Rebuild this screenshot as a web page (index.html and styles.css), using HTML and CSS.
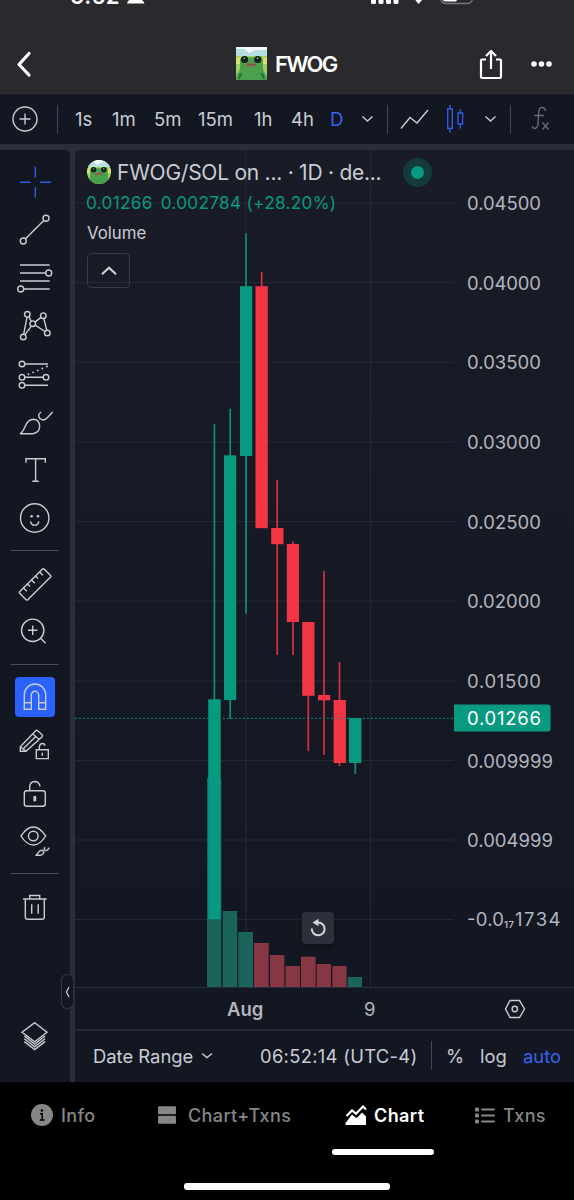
FILE: index.html
```html
<!DOCTYPE html>
<html lang="en">
<head>
    <meta charset="UTF-8">
    <meta name="viewport" content="width=device-width, initial-scale=1.0">
    <title>FWOG Chart</title>
    <link rel="stylesheet" href="styles.css">
</head>
<body>
    <div class="app">
        <div class="status-bar">
            <span class="clock">6:52</span>
            <svg class="status-icons" width="574" height="8" viewBox="0 0 574 8">
                <path d="M127 3.500q1-5 8.500-5t9 5z" fill="#fff"/>
                <g fill="#fff">
                    <rect x="371" y="-6" width="5" height="10" rx="1.500"/>
                    <rect x="378.500" y="-8" width="5" height="12" rx="1.500"/>
                    <rect x="386" y="-8" width="5" height="12" rx="1.500"/>
                    <rect x="393.500" y="-8" width="5" height="12" rx="1.500"/>
                    <path d="M414.500-1h8.500l-4.500 5z"/>
                    <rect x="443" y="-8" width="14" height="9.500" rx="2"/>
                </g>
                <rect x="440.500" y="-12" width="32" height="15.500" rx="5" fill="none" stroke="#77777b" stroke-width="1.300"/>
            </svg>
        </div>

        <div class="header">
            <svg width="24" height="30" viewBox="0 0 24 30" fill="none" stroke="#fff" stroke-width="3.200" stroke-linecap="round" stroke-linejoin="round"><path d="M14 4.500L4 15.500L14 26"/></svg>
            <div class="title">
                <svg width="31" height="33" viewBox="0 0 31 33">
                    <g id="frog">
                        <rect width="31" height="33" fill="#9fce62"/>
                        <rect width="31" height="9" fill="#b8dfe0"/>
                        <path d="M0 2h8l5 4 7-3h11V0H0z" fill="#f2f7f7"/>
                        <path d="M0 11q6-3 9 0v6H0zM23 12q4-3 8-1v6h-8z" fill="#d5e46c"/>
                        <path d="M0 33q0-6 3.500-9 1-3 .5-11 1-4 5-4 2 0 3 1.500h7Q20 9 22.500 9q4 0 4.500 4-.5 8 .5 11 3.500 4 3.500 9z" fill="#4ba04d"/>
                        <path d="M6 26l-3 6M25 26l3 6M4 27l-1 5M27 27l1 5" stroke="#1d6a3a" stroke-width="1.200"/>
                        <circle cx="8.500" cy="12.500" r="3.600" fill="#14241b"/>
                        <circle cx="21.700" cy="12.500" r="3.600" fill="#14241b"/>
                        <circle cx="8.300" cy="11.300" r=".8" fill="#b9c8bf"/>
                        <circle cx="21.500" cy="11.300" r=".8" fill="#b9c8bf"/>
                        <path d="M9.800 18q1.200-2.200 5.200-2.200t5.500 2.200q-1 1.800-5.500 1.800T9.800 18z" fill="#9a6a55"/>
                        <path d="M11 18q5-1 9 0" stroke="#6e4a3b" stroke-width=".8" fill="none"/>
                    </g>
                </svg>
                <span>FWOG</span>
            </div>
            <div class="actions">
                <svg width="24" height="32" viewBox="0 0 24 32" fill="none" stroke="#fff" stroke-width="2.200" stroke-linejoin="round"><path d="M7 11.500H3q-1 0-1 1V29q0 1 1 1h18q1 0 1-1V12.500q0-1-1-1h-4"/><path d="M12 21V3.500M7 8l5-5 5 5"/></svg>
                <svg width="22" height="8" viewBox="0 0 22 8" fill="#fff"><circle cx="3" cy="4" r="2.800"/><circle cx="10.500" cy="4" r="2.800"/><circle cx="18" cy="4" r="2.800"/></svg>
            </div>
        </div>

        <div class="toolbar">
            <div class="add"><svg width="28" height="28" viewBox="0 0 28 28"><circle cx="14" cy="14" r="12"/><path d="M8.500 14h11M14 8.500v11"/></svg></div>
            <i class="divider"></i>
            <span>1s</span>
            <span>1m</span>
            <span>5m</span>
            <span>15m</span>
            <span>1h</span>
            <span>4h</span>
            <span class="active">D</span>
            <svg width="13" height="8" viewBox="0 0 13 8"><path d="M1.500 1.500l5 4.500 5-4.500"/></svg>
            <i class="divider"></i>
            <svg width="32" height="24" viewBox="0 0 32 24"><path d="M2 21.500L11 10.500l7 5.500L29 3"/></svg>
            <svg class="blue" width="22" height="30" viewBox="0 0 22 30"><path d="M2.700 5h4.600v19.500H2.700zM5 1v4M5 24.500v4M13 9h4.600v11H13zM15.300 5v4M15.300 20v4.500"/></svg>
            <svg width="13" height="8" viewBox="0 0 13 8"><path d="M1.500 1.500l5 4.500 5-4.500"/></svg>
            <i class="divider"></i>
            <svg class="dim" width="22" height="28" viewBox="0 0 22 28"><path d="M14.500 6q-.5-3.500-3.500-3.500-3 0-3.300 5l-.7 11q-.5 5-3.500 5-1.800 0-2-2.500M3.500 10.500h9.500M11.500 17.500l6 7M17.500 17.500l-6 7"/></svg>
        </div>

        <div class="workspace">
            <div class="sidebar">
                <svg class="tool blue" viewBox="0 0 48 48"><path d="M9 24.300h10.700M29 24.300h11M24.300 8.700v11M24.300 29.300v10.500"/></svg>
                <svg class="tool" viewBox="0 0 48 48"><circle cx="12.300" cy="35" r="3"/><circle cx="35" cy="12.300" r="3"/><path d="M14.500 32.800L32.800 14.500"/></svg>
                <svg class="tool" viewBox="0 0 48 48"><path d="M9 11h29.700M9 19h25.700M9 27h29.700M12.700 35h26"/><circle cx="37.700" cy="19" r="3"/><circle cx="9.700" cy="35" r="3"/></svg>
                <svg class="tool" viewBox="0 0 48 48"><circle cx="12.300" cy="35" r="2.800"/><circle cx="16.300" cy="12.300" r="2.800"/><circle cx="21.700" cy="21.700" r="2.800"/><circle cx="32.300" cy="13.700" r="2.800"/><circle cx="36.300" cy="31" r="2.800"/><path d="M12.700 32.200L16 15.100M17.700 14.700l2.600 4.600M24 20.100l6-4.700M32.800 16.500l3 11.800M24.200 23.200l9.700 6.300M20.300 24.200L14 32.700"/></svg>
                <svg class="tool" viewBox="0 0 48 48"><circle cx="11" cy="14" r="2.800"/><circle cx="11" cy="27.300" r="2.800"/><circle cx="35" cy="27.300" r="2.800"/><circle cx="11" cy="35.300" r="2.800"/><path d="M13.800 14H37M13.800 27.300h18.400M13.800 35.300H37"/><path d="M17.500 24.300L36 16.500" stroke-width="1.900" stroke-linecap="round" stroke-dasharray="0 5"/></svg>
                <svg class="tool" viewBox="0 0 48 48"><path d="M9 35.700q2.500-1.200 5-7 3-7.400 8.500-7.400 6 .5 6.200 7 0 6-6.700 7.400zM41.700 14L36 20q-3.500 3.500-6.700.8-3.800-3.800 1-6.800"/></svg>
                <svg class="tool" viewBox="0 0 48 48"><path d="M15 16.700v-4h19.300v4M24.600 12.700v22.600M21.300 35.300h6.500"/></svg>
                <svg class="tool" viewBox="0 0 48 48"><circle cx="23.700" cy="24" r="14.200"/><path d="M19.600 27.300q.5 3.800 4.100 3.800t4.100-3.800"/><circle class="dot" cx="20.600" cy="22.300" r="1.300"/><circle class="dot" cx="27" cy="22.300" r="1.300"/></svg>
                <hr>
                <svg class="tool" viewBox="0 0 48 48"><path d="M31.300 9.300q1-1 2 0l6 6q1 1 0 2L17 39.600q-1.200 1-2.200 0l-6-6q-1-1 0-2zM12.600 28l3.200 3.200M16.600 24l2.400 2.400M20.600 20l3.200 3.200M24.600 16l2.400 2.400M28.600 12l3.200 3.200"/></svg>
                <svg class="tool" viewBox="0 0 48 48"><circle cx="21.700" cy="22.300" r="11.200"/><path d="M17 22.300h9.400M21.700 17.600V27M29.500 30.300l5.200 5"/></svg>
                <hr>
                <div class="tool selected"><svg viewBox="4 4 40 40"><path d="M13.300 36.300V21.700a10.700 10.700 0 0 1 21.400 0v14.600h-7V22a3.700 3.700 0 0 0-7.400 0v14.300zM13.300 29.700h7M27.700 29.700h7"/></svg></div>
                <svg class="tool" viewBox="0 0 48 48"><path d="M9.300 30.300v-4.600L24.700 9.800q1-1 2 0l4.400 4q1 1 0 2L15 30.300zM9.300 25.700l5.700 4.600M21.700 12.800l6.300 5.800M12.500 27.500L25 15.300"/><path d="M25.300 28.800h12v8.800h-12zM28.300 28.800v-3q.5-3.300 3-3.300t2.700 2.300M31.300 31.700v3"/></svg>
                <svg class="tool" viewBox="0 0 48 48"><rect x="13.300" y="21.700" width="21" height="15.600" rx="2.500"/><path d="M18.700 21.700v-4q.3-5 5-5.200 4.500 0 5.400 5"/><path d="M23.800 28.200v3" stroke-width="2.800" stroke-linecap="round"/></svg>
                <svg class="tool" viewBox="0 0 48 48"><path d="M10 19Q16 10 22.300 10T34.700 19Q29 28 22.300 28T10 19z"/><circle cx="22.300" cy="19" r="4.800"/><path d="M24.500 38.300q1.700-.5 2.800-2.800 1.500-2.500 4-2.200 2 .7 1.200 3-1 2-3.200 2zM38.300 30.800L36.500 33q-1.500 1.200-2.700 0-1.300-1.500.5-2.700"/></svg>
                <hr>
                <svg class="tool" viewBox="0 0 48 48"><path d="M12 16h23.700M18.700 16v-3.500h10V16M14.300 16v18q0 2.300 2.300 2.300H31q2.300 0 2.300-2.300V16M20.700 21.300v9.500M27.200 21.300v9.500"/></svg>
                <svg class="tool layers" viewBox="0 0 48 48"><path d="M23.700 11.700L36 21.300l-12.300 9.400L11 21.300zM13.300 25l10.400 8 10.400-8M13.300 27.800l10.400 8 10.400-8M13.300 30.600l10.400 8 10.400-8"/></svg>
                <div class="collapse"><svg width="5" height="12" viewBox="0 0 5 12"><path d="M4 1L1.500 6 4 11"/></svg></div>
            </div>

            <div class="main">
                <div class="chart">
                    <svg class="plot" width="499" height="837" viewBox="75 150 499 837">
                        <path class="grid" d="M75 203H454M75 282.500H454M75 362H454M75 442H454M75 521.500H454M75 601H454M75 681H454M75 760.500H454M75 840H454M75 919.500H454M246 150V987M370.500 150V987"/>

                        <!-- volume -->
                        <g class="vol-up">
                            <rect x="207" y="778" width="14.300" height="209"/>
                            <rect x="222.700" y="911" width="14.500" height="76"/>
                            <rect x="238.300" y="932" width="14.700" height="55"/>
                            <rect x="347.700" y="977" width="14.300" height="10"/>
                        </g>
                        <g class="vol-down">
                            <rect x="254" y="943" width="14.700" height="44"/>
                            <rect x="270" y="955" width="14.300" height="32"/>
                            <rect x="285.500" y="966" width="14.500" height="21"/>
                            <rect x="301" y="956.700" width="14.700" height="30.300"/>
                            <rect x="316.700" y="964" width="14.300" height="23"/>
                            <rect x="332.300" y="966" width="14.300" height="21"/>
                        </g>

                        <!-- candles -->
                        <g class="up">
                            <path d="M214.400 424.300V700M230.200 408.700V718.500M246 233.300V613.500M355.300 718V774"/>
                            <rect x="208.200" y="699.300" width="12.500" height="220"/>
                            <rect x="224" y="455.300" width="12.200" height="244.700"/>
                            <rect x="240" y="286.200" width="12.200" height="169.800"/>
                            <rect x="349" y="718" width="12.400" height="45"/>
                        </g>
                        <g class="down">
                            <path d="M261.700 272V290M277.200 480V655M293 541.500V655M308.300 622V751M324 571V755M339.500 662V766"/>
                            <rect x="255.500" y="286.200" width="12.300" height="242"/>
                            <rect x="271.200" y="528" width="12.300" height="16.200"/>
                            <rect x="286.800" y="544" width="12.200" height="78"/>
                            <rect x="302.200" y="622" width="12.300" height="73.800"/>
                            <rect x="318" y="695" width="12.200" height="5.300"/>
                            <rect x="333.600" y="700" width="12.300" height="63"/>
                        </g>
                        <path class="price-line" d="M75 718.300H454"/>

                        <g class="scale">
                            <text x="467" y="210" textLength="74">0.04500</text>
                            <text x="467" y="289.500" textLength="74">0.04000</text>
                            <text x="467" y="369" textLength="74">0.03500</text>
                            <text x="467" y="449" textLength="74">0.03000</text>
                            <text x="467" y="528.500" textLength="74">0.02500</text>
                            <text x="467" y="608" textLength="74">0.02000</text>
                            <text x="467" y="688" textLength="74">0.01500</text>
                            <text x="467" y="767.500" textLength="86">0.009999</text>
                            <text x="467" y="847" textLength="86">0.004999</text>
                            <text x="467" y="926.200" textLength="37">-0.0</text>
                            <text class="sub" x="504" y="928" textLength="10">17</text>
                            <text x="515" y="926.200" textLength="45.500">1734</text>
                        </g>
                        <path d="M454 704.500h94q2.500 0 2.500 2.500v22q0 2.500-2.500 2.500h-94z" fill="#089981"/>
                        <text class="last" x="467" y="725.300" textLength="74">0.01266</text>
                    </svg>

                    <div class="legend">
                        <div class="symbol">
                            <svg width="24" height="24" viewBox="0 0 31 31"><clipPath id="round"><circle cx="15.500" cy="15.500" r="15.500"/></clipPath><g clip-path="url(#round)"><use href="#frog"/></g></svg>
                            <span>FWOG/SOL on ... · 1D · de...</span>
                            <i class="live"></i>
                        </div>
                        <div class="values"><span>0.01266</span><span>0.002784 (+28.20%)</span></div>
                        <div class="volume">Volume</div>
                        <div class="toggle"><svg width="18" height="11" viewBox="0 0 18 11"><path d="M2 9.200l7-6.500 7 6.500"/></svg></div>
                    </div>
                    <div class="reset"><svg width="18" height="20" viewBox="0 0 18 20"><path d="M2.800 10.500A6.400 6.400 0 1 0 9 4.500H6" fill="none" stroke="#d1d4dc" stroke-width="2"/><path d="M3.500 4.500L9.500.800v7.400z" fill="#d1d4dc"/></svg></div>
                </div>

                <div class="time-axis">
                    <b>Aug</b>
                    <span>9</span>
                    <svg width="22" height="20" viewBox="0 0 22 20"><path d="M6 1.500h9.500l5 8.500-5 8.500H6L1.500 10z"/><circle cx="10.800" cy="10" r="2.700"/></svg>
                </div>

                <div class="bottom-bar">
                    <span class="range">Date Range</span>
                    <svg width="12" height="8" viewBox="0 0 12 8"><path d="M1 1.500l5 4 5-4"/></svg>
                    <span class="utc">06:52:14 (UTC-4)</span>
                    <i class="divider"></i>
                    <span>%</span>
                    <span>log</span>
                    <span class="active">auto</span>
                </div>
            </div>
        </div>

        <div class="tabs">
            <div class="tab">
                <svg width="22" height="22" viewBox="0 0 22 22"><circle cx="11" cy="11" r="11" fill="#868686"/><path d="M9 9.800h2.200V16M8.800 16h4.800" fill="none" stroke="#000" stroke-width="1.500"/><circle cx="10.900" cy="6.500" r="1.300"/></svg>
                <span>Info</span>
            </div>
            <div class="tab both">
                <svg width="18" height="18" viewBox="0 0 18 18" fill="#868686"><rect y=".3" width="18" height="8" rx="1"/><rect y="9.700" width="18" height="8" rx="1"/></svg>
                <span>Chart+Txns</span>
            </div>
            <div class="tab current">
                <svg width="22" height="20" viewBox="0 0 22 20"><path d="M1.500 11L7 5.500l4 3.200L18 1.500l3 3" fill="none" stroke="#fff" stroke-width="2.200"/><path d="M.5 20v-2L7 9.500l4.500 3.700L17 7.500l4 4V20z" fill="#fff"/></svg>
                <span>Chart</span>
            </div>
            <div class="tab">
                <svg width="20" height="17" viewBox="0 0 20 17" fill="#868686"><rect y=".5" width="4" height="4" rx="1"/><rect y="6.500" width="4" height="4" rx="1"/><rect y="12.500" width="4" height="4" rx="1"/><rect x="6" y="1.500" width="14" height="2" rx="1"/><rect x="6" y="7.500" width="14" height="2" rx="1"/><rect x="6" y="13.500" width="14" height="2" rx="1"/></svg>
                <span>Txns</span>
            </div>
            <i class="underline"></i>
            <i class="home"></i>
        </div>
    </div>
</body>
</html>
```
FILE: styles.css
```css
* {
    box-sizing: border-box;
}
body {
    margin: 0;
    background: #000;
    font-family: Inter, 'Liberation Sans', sans-serif;
    color: #c9ccd5;
}
svg {
    display: block;
    flex: none;
}
.app {
    width: 574px;
    height: 1200px;
    overflow: hidden;
    display: flex;
    flex-direction: column;
}

/* top */
.status-bar {
    height: 34px;
    background: #29292e;
    position: relative;
}
.clock {
    position: absolute;
    left: 70px;
    top: -18px;
    font-size: 22px;
    line-height: 28px;
    font-weight: 600;
    color: #fff;
    letter-spacing: 0.3px;
}
.status-icons {
    position: absolute;
    left: 0;
    top: 0;
}
.header {
    height: 60px;
    padding: 0 21px 0 15px;
    background: #29292e;
    border-bottom: 1px solid #303137;
    display: grid;
    grid-template-columns: 221px 1fr auto;
    align-items: center;
}
.title {
    display: flex;
    align-items: center;
    gap: 8px;
    color: #fff;
    font-size: 22px;
    font-weight: 600;
    letter-spacing: -1.7px;
}
.actions {
    display: flex;
    align-items: center;
    gap: 28px;
}
.toolbar {
    height: 50px;
    background: #131722;
    display: grid;
    grid-template-columns: 51px 24px 37px 42px 44px 56px 37px 39px 31px 20px 18px 46px 39px 20px 27px auto;
    grid-template-rows: 50px;
    align-items: center;
    font-size: 18.5px;
}
.toolbar svg, .time-axis svg, .bottom-bar svg {
    fill: none;
    stroke: #c9ccd5;
    stroke-width: 1.4;
}
.toolbar .add {
    padding-left: 11px;
}
.divider {
    width: 1px;
    height: 29px;
    background: #434651;
}
.toolbar .divider {
    margin-left: 6px;
}
.toolbar svg.blue, .tool.blue {
    stroke: #2f5be8;
}
.toolbar svg.dim {
    stroke: #666a76;
}
.active {
    color: #3763ee;
}

/* workspace */
.workspace {
    height: 938px;
    padding-top: 6px;
    background: #2a2e39;
    display: flex;
    gap: 5px;
}
.sidebar {
    width: 70px;
    padding: 8px 0 23px;
    background: #131722;
    border-top-right-radius: 5px;
    display: flex;
    flex-direction: column;
    align-items: center;
    position: relative;
}
.tool {
    width: 48px;
    height: 48px;
    flex: none;
    fill: none;
    stroke: #c9ccd5;
    stroke-width: 1.4;
}
.tool .dot {
    fill: #c9ccd5;
    stroke: none;
}
.sidebar hr {
    width: 48px;
    height: 1px;
    margin: 8px 0 8.5px;
    border: 0;
    background: #4a4d58;
}
.selected {
    padding: 4px;
}
.selected svg {
    width: 40px;
    height: 40px;
    border-radius: 4px;
    background: #2962ff;
}
.layers {
    margin-top: auto;
}
.collapse {
    position: absolute;
    left: 61px;
    top: 824px;
    width: 12px;
    height: 35px;
    border: 1px solid #363a45;
    border-right: 0;
    border-radius: 6px;
    background: #131722;
    display: flex;
    align-items: center;
    justify-content: center;
}
.collapse svg {
    fill: none;
    stroke: #c9ccd5;
    stroke-width: 1.2;
}
.main {
    width: 499px;
    background: #131722;
    border-top-left-radius: 5px;
    overflow: hidden;
}
.chart {
    height: 837px;
    position: relative;
    background: linear-gradient(#191c27, #131722);
}
.plot {
    position: absolute;
    left: 0;
    top: 0;
}
.grid {
    stroke: #242832;
    stroke-width: 1.2;
}
.up { fill: #089981; }
.down { fill: #f23645; }
.up path { stroke: #0b8f7b; stroke-width: 1.7; }
.down path { stroke: #d63141; stroke-width: 1.7; }
.vol-up { fill: #1b645b; }
.vol-down { fill: #873644; }
.price-line {
    stroke: #148574;
    stroke-width: 1.3;
    stroke-dasharray: 1.7 2.3;
}
.scale {
    font-size: 18.5px;
    fill: #b2b5be;
}
.scale .sub {
    font-size: 9.5px;
    font-weight: 600;
}
.last {
    font-size: 18.5px;
    fill: #fff;
}
.legend {
    position: relative;
    padding: 8px 0 0 12px;
}
.symbol {
    display: flex;
    align-items: center;
    height: 28px;
    gap: 6px;
    font-size: 21px;
    letter-spacing: -0.25px;
    white-space: pre;
}
.symbol span {
    width: 280px;
}
.live {
    width: 29px;
    height: 29px;
    border-radius: 50%;
    border: 8px solid #143a3d;
    background: #089981;
}
.values {
    display: flex;
    gap: 8px;
    margin: 6px 0 0 -1px;
    line-height: 22px;
    font-size: 17.2px;
    letter-spacing: 0.3px;
    color: #089981;
}
.volume {
    margin-top: 8px;
    font-size: 16.8px;
    line-height: 22px;
}
.toggle {
    width: 43px;
    height: 35px;
    margin-top: 9px;
    border: 1px solid #363a45;
    border-radius: 4px;
    display: flex;
    align-items: center;
    justify-content: center;
}
.toggle svg {
    fill: none;
    stroke: #d1d4dc;
    stroke-width: 2;
}
.reset {
    position: absolute;
    left: 227px;
    top: 762px;
    width: 32px;
    height: 32px;
    border-radius: 4px;
    background: #2c303b;
    box-shadow: 0 2px 4px rgba(0, 0, 0, 0.4);
    display: flex;
    align-items: center;
    justify-content: center;
}
.time-axis {
    height: 42px;
    border-top: 1px solid #2a2e39;
    display: grid;
    grid-template-columns: 289px 140px auto;
    align-items: center;
    font-size: 18.5px;
    color: #b2b5be;
}
.time-axis b {
    padding-left: 152px;
    font-weight: 600;
}
.bottom-bar {
    height: 53px;
    border-top: 2px solid #242833;
    padding: 0 0 2px 18px;
    display: grid;
    grid-template-columns: 108px 59px 171px 15px 34px 43px auto;
    align-items: center;
    font-size: 18.4px;
    white-space: nowrap;
}
.utc {
    letter-spacing: 0.3px;
}

/* tab bar */
.tabs {
    height: 118px;
    background: #000;
    position: relative;
    display: grid;
    grid-template-columns: 127px 187px 130px auto;
    align-items: start;
    padding: 21px 0 0 31px;
    color: #868686;
    font-size: 18px;
    font-weight: 500;
    letter-spacing: 0.4px;
}
.tab {
    height: 24px;
    display: flex;
    align-items: center;
    gap: 8px;
}
.both {
    gap: 12px;
}
.current {
    gap: 7px;
    color: #fff;
    font-weight: 600;
}
.underline, .home {
    position: absolute;
    border-radius: 3px;
    background: #fff;
}
.underline {
    left: 332px;
    top: 67px;
    width: 102px;
    height: 6px;
}
.home {
    left: 184px;
    top: 101px;
    width: 206px;
    height: 7px;
}
```
